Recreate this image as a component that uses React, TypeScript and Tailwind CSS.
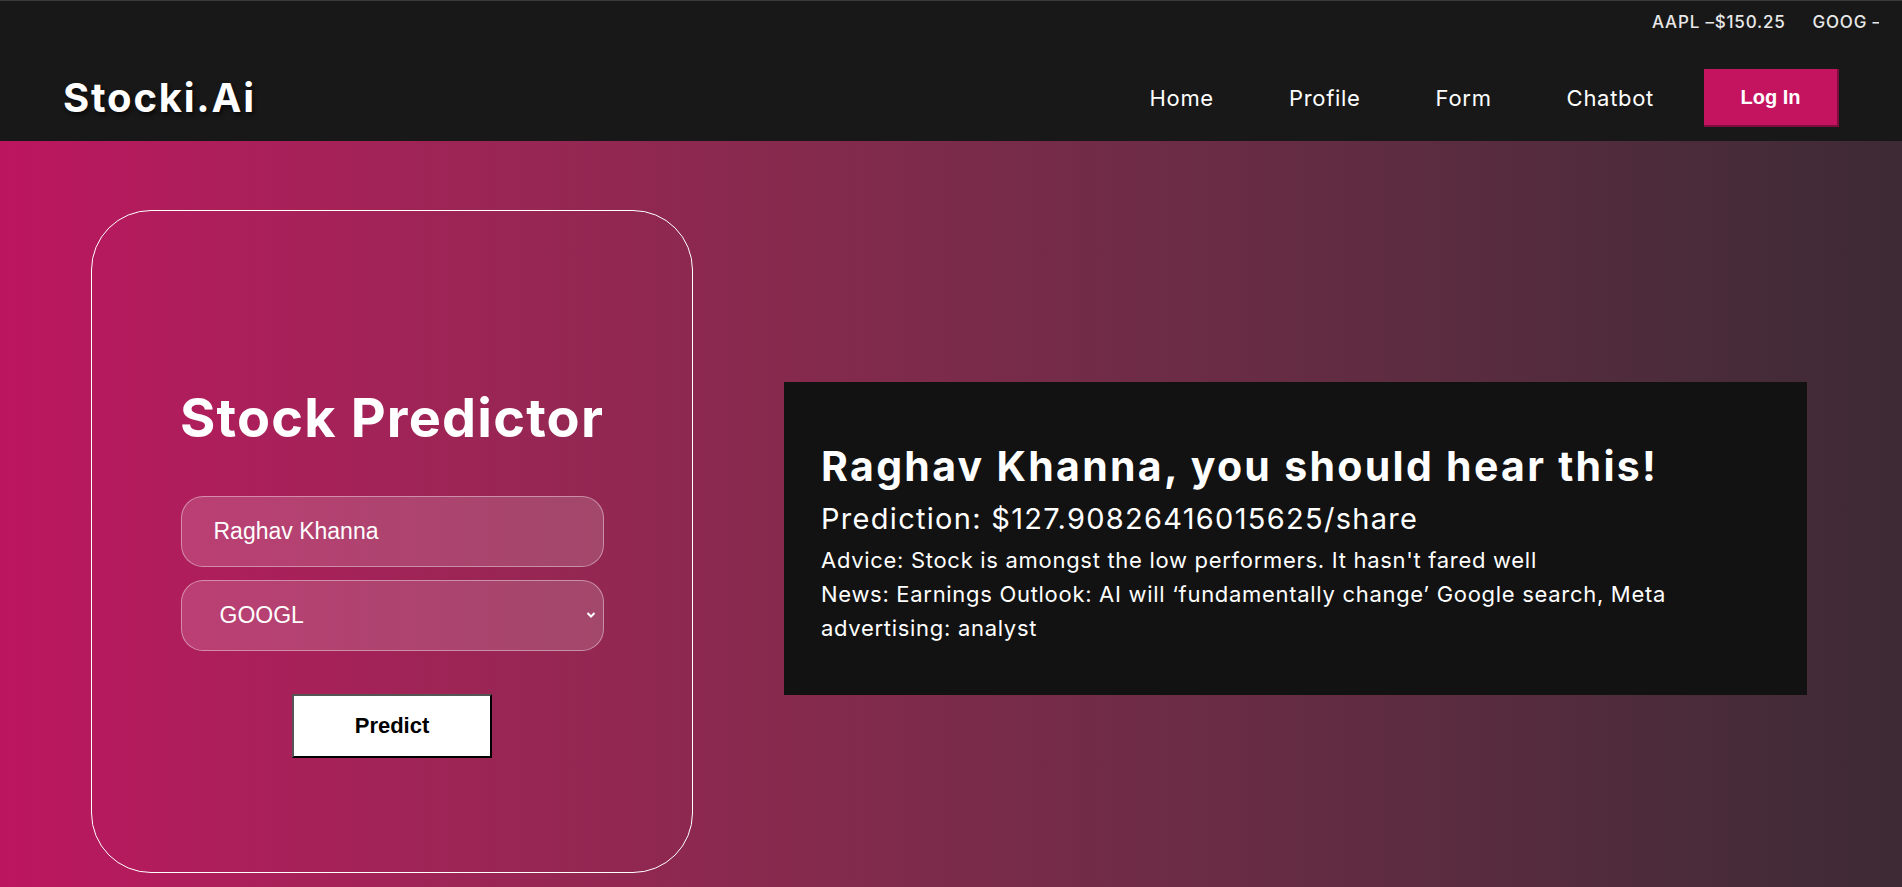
import React, { useState } from 'react';

const tickers = [
  { sym: 'AAPL', price: '$150.25' },
  { sym: 'GOOG', price: '$2750.80' },
  { sym: 'MSFT', price: '$299.35' },
  { sym: 'AMZN', price: '$3400.10' },
];

const navLinks = ['Home', 'Profile', 'Form', 'Chatbot'];

const font = { fontFamily: 'Inter, "Noto Sans", sans-serif' };
const arial = { fontFamily: '"Liberation Sans", Arial, sans-serif' };

const App: React.FC = () => {
  const [name, setName] = useState('Raghav Khanna');
  const [stock, setStock] = useState('GOOGL');

  return (
    <div className="w-[1902px] h-[887px] overflow-hidden bg-[#181818] border-t border-[#3c3c3c]" style={font}>
      {/* header */}
      <header className="h-[140px] bg-[#181818] flex flex-col">
        <div className="h-[44px] flex justify-end items-center">
          <div className="w-[227px] mr-[23px] overflow-hidden whitespace-nowrap flex gap-[27px] text-[17px] font-medium tracking-[0.8px] text-[#e8e8e8]">
            {tickers.map((t) => (
              <span key={t.sym}>
                {t.sym} –{t.price}
              </span>
            ))}
          </div>
        </div>
        <div className="flex-1 flex items-center justify-between px-[63px] pt-[10px]">
          <h1 className="text-[40px] font-bold text-white tracking-[1.8px] [text-shadow:2px_3px_4px_rgba(0,0,0,0.6)]">
            Stocki.Ai
          </h1>
          <nav className="flex items-center">
            <ul className="flex items-center gap-[75px] mr-[50px]">
              {navLinks.map((l) => (
                <li key={l} className="text-[22px] tracking-[0.7px] text-white">
                  {l}
                </li>
              ))}
            </ul>
            <button
              className="w-[135px] h-[58px] bg-[#c4135f] border-r-2 border-b-2 border-[#7d0d3e] text-white text-[20px] font-bold"
              style={arial}
            >
              Log In
            </button>
          </nav>
        </div>
      </header>

      {/* main */}
      <main className="h-[800px] bg-gradient-to-r from-[#bc1560] to-[#3d2a35] flex items-center pl-[91px] gap-[91px]">
        <div className="w-[602px] h-[663px] border border-white rounded-[60px] flex flex-col items-center pt-[176px]">
          <h2 className="text-[54px] font-bold text-white tracking-[1.2px] leading-[62px]">Stock Predictor</h2>
          <input
            value={name}
            onChange={(e) => setName(e.target.value)}
            className="mt-[47px] w-[423px] h-[71px] rounded-[22px] bg-white/15 border border-white/40 pl-[32px] text-[23px] text-white outline-none"
            style={arial}
          />
          <div className="relative mt-[13px] w-[423px] h-[71px]">
            <select
              value={stock}
              onChange={(e) => setStock(e.target.value)}
              className="appearance-none w-full h-full rounded-[22px] bg-white/15 border border-white/40 pl-[38px] text-[23px] text-white outline-none"
              style={arial}
            >
              <option className="text-black">GOOGL</option>
              <option className="text-black">AAPL</option>
              <option className="text-black">MSFT</option>
            </select>
            <svg
              className="absolute right-[8px] top-[31px] pointer-events-none"
              width="10"
              height="8"
              viewBox="0 0 10 8"
              fill="none"
              stroke="white"
              strokeWidth="2"
            >
              <path d="M1.5 2 L5 5.5 L8.5 2" />
            </svg>
          </div>
          <button
            className="mt-[43px] w-[200px] h-[64px] bg-white text-black text-[22px] font-bold border-2 border-t-[#555] border-l-[#555] border-r-black border-b-black"
            style={arial}
          >
            Predict
          </button>
        </div>

        <div className="w-[1023px] h-[313px] mb-[6px] bg-[#121212] pl-[37px] pt-[56px] text-white">
          <h3 className="text-[41px] font-bold leading-[56px] tracking-[2.3px] mb-[5px]">
            Raghav Khanna, you should hear this!
          </h3>
          <p className="text-[29px] leading-[40px] tracking-[1.3px]">Prediction: $127.90826416015625/share</p>
          <p className="text-[22px] leading-[34px] tracking-[0.7px] mt-[4px]">
            Advice: Stock is amongst the low performers. It hasn't fared well
          </p>
          <p className="text-[22px] leading-[34px] tracking-[0.7px] max-w-[880px]">
            News: Earnings Outlook: AI will ‘fundamentally change’ Google search, Meta advertising: analyst
          </p>
        </div>
      </main>
    </div>
  );
};

export default App;
